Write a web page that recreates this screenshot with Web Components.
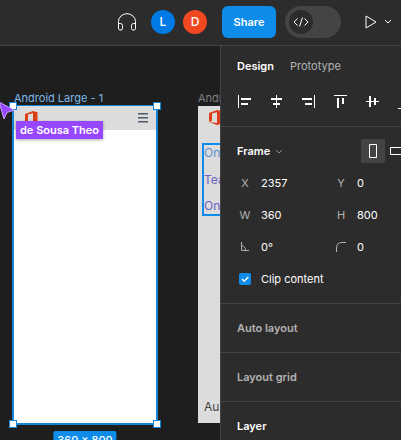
<!DOCTYPE html>
<html lang="en">
<head>
<meta charset="utf-8">
<title>Design editor</title>
<style>
html, body { height: 100%; }
body { margin: 0; overflow: hidden; background: #1e1e1e; font-family: Inter, "Liberation Sans", sans-serif; font-size: 11px; line-height: 16px; color: #fff; }
</style>
</head>
<body>
<editor-app></editor-app>
<script>
const reset = `
  *, *::before, *::after { box-sizing: border-box; }
  button, input { font: inherit; color: inherit; background: none; border: 0; padding: 0; margin: 0; }
  svg { display: block; }
  h2 { margin: 0; font-size: 11px; line-height: 16px; font-weight: 600; }
`;
function define(name, css, html) {
  customElements.define(name, class extends HTMLElement {
    constructor() {
      super();
      const markup = typeof html === 'function' ? html(this) : html;
      this.attachShadow({ mode: 'open' }).innerHTML = `<style>${reset}${css}</style>${markup}`;
    }
  });
}

define('user-avatar', `
  :host { display: grid; place-items: center; width: 24px; height: 24px; border-radius: 50%; background: var(--tone); font-size: 12px; font-weight: 500; }
`, `<slot></slot>`);

define('dev-switch', `
  :host { display: block; }
  label { display: flex; align-items: center; width: 56px; height: 32px; padding: 4px; border-radius: 16px; background: #444; }
  input { appearance: none; position: absolute; }
  span { display: grid; place-items: center; width: 24px; height: 24px; border-radius: 50%; background: #2c2c2c; }
`, `<label><input type="checkbox" role="switch" aria-label="Dev mode"><span>
  <svg width="16" height="10" viewBox="0 0 16 10" fill="none" stroke="#fff"><path d="M4.500 1.500 1 5l3.500 3.500M11.500 1.500 15 5l-3.500 3.500M9.500 .5l-3 9"/></svg></span></label>`);

define('top-bar', `
  :host { display: flex; justify-content: flex-end; align-items: center; height: 46px; padding: 0 9px 2px 0; background: #2c2c2c; border-bottom: 1px solid #444; }
  .people { display: flex; gap: 8px; margin: 0 15px 0 14px; }
  .share { width: 54px; height: 32px; margin-right: 9px; border-radius: 6px; background: #0d8ce9; font-weight: 600; }
  .play { margin: 0 7px 0 24px; }
`, `
  <button aria-label="Audio"><svg width="20" height="18" viewBox="0 0 20 18" fill="none" stroke="#fff"><path d="M1.500 15V8.500a8.500 7.800 0 0 1 17 0V15M1.500 10.500h2q2 0 2 2v3q0 1.500-1.500 1.500h-1q-1.500 0-1.500-1.500zM18.500 10.500h-2q-2 0-2 2v3q0 1.500 1.500 1.500h1q1.500 0 1.500-1.500z"/></svg></button>
  <div class="people"><user-avatar style="--tone:#007be5">L</user-avatar><user-avatar style="--tone:#f24822">D</user-avatar></div>
  <button class="share">Share</button>
  <dev-switch></dev-switch>
  <button class="play" aria-label="Present"><svg width="12" height="14" viewBox="0 0 12 14" fill="none" stroke="#fff"><path d="M1 1v12l10-6z"/></svg></button>
  <button aria-label="Present options"><svg width="8" height="5" viewBox="0 0 8 5" fill="none" stroke="#fff"><path d="m1 1 3 3 3-3"/></svg></button>`);

define('office-logo', `:host { display: block; }`,
  `<svg width="13" height="15" viewBox="0 0 13 15"><path fill="#dc3e15" d="M0 3 8 0l4.500 1.300v12.400L8 15l-8-3 8 1V2.300L3 3.500v7.200L0 12z"/></svg>`);

define('remote-cursor', `
  :host { position: absolute; left: 0; top: 101px; }
  svg { position: absolute; left: 0; top: 0; }
  span { position: absolute; left: 16px; top: 20px; padding: 1px 4px; background: #9747ff; font-weight: 600; white-space: nowrap; box-shadow: 0 1px 3px #0005; }
`, `<svg width="15" height="19" viewBox="0 0 15 19"><path d="M-1 1 14 9 7 11.500 4 18z" fill="#9747ff" stroke="#c9a0ff"/></svg><span><slot></slot></span>`);

define('phone-frame', `
  :host { position: absolute; left: 14px; top: 106px; width: 142px; height: 317px; background: #fff; box-shadow: 0 0 0 1px #1684d5, 1px 1px 0 1px #1684d5, -1px 1px 0 1px #1684d5; }
  .title { position: absolute; left: 0; top: -16px; color: #7bb8e4; white-space: nowrap; }
  header { display: flex; justify-content: space-between; align-items: center; height: 24px; padding: 0 8px 0 11px; background: #dcdcdc; }
  i { position: absolute; width: 8px; height: 8px; background: #fff; border: 1px solid #1684d5; }
  .nw, .sw { left: -5px; } .ne, .se { right: -5px; }
  .nw, .ne { top: -4px; } .sw, .se { bottom: -5px; }
  .size { position: absolute; left: 50%; top: 325px; translate: -50% 0; padding: 1px 4px; border-radius: 2px; background: #0d8ce9; font-weight: 500; white-space: nowrap; }
`, `<div class="title">Android Large - 1</div>
  <header><office-logo></office-logo><svg width="10" height="10" viewBox="0 0 10 10" fill="#4d5967"><path d="M0 0h10v1.500H0zM0 4h10v1.500H0zM0 8h10v1.500H0z"/></svg></header>
  <i class="nw"></i><i class="ne"></i><i class="sw"></i><i class="se"></i><div class="size">360 x 800</div>`);

define('menu-frame', `
  :host { position: absolute; left: 198px; top: 106px; width: 143px; height: 317px; background: #dcdcdc; font-size: 12px; }
  .title { position: absolute; left: 0; top: -16px; font-size: 11px; color: #808080; }
  office-logo { position: absolute; left: 11px; top: 4px; }
  .list { position: absolute; left: 4px; top: 37px; width: 135px; height: 73px; border: 2px solid #0d8ce9; display: flex; flex-direction: column; justify-content: space-between; color: #6a62c4; }
  .list :first-child { color: #5c8fd0; }
  .foot { position: absolute; left: 6px; bottom: 8px; font-size: 12px; color: #444; }
`, `<div class="title">Andr</div><office-logo></office-logo>
  <div class="list"><span>On</span><span>Tea</span><span>On</span></div><div class="foot">Au</div>`);

define('design-canvas', `:host { display: block; position: relative; flex: 1; min-width: 0; overflow: hidden; background: #1e1e1e; }`,
  `<phone-frame></phone-frame><menu-frame></menu-frame><remote-cursor>de Sousa Theo</remote-cursor>`);

define('number-field', `
  :host { display: block; flex: 0 0 96px; }
  label { display: grid; grid-template-columns: 24px 1fr; align-items: center; height: 32px; }
  span { display: grid; place-items: center; width: 16px; color: #b3b3b3; }
  input { width: 100%; min-width: 0; height: 24px; }
`, el => {
  const icons = {
    Rotation: '<svg width="10" height="10" viewBox="0 0 10 10" fill="none" stroke="#b3b3b3"><path d="M1.500 0v8.500H9M1.500 3.500a5 5 0 0 1 4 5"/></svg>',
    Radius: '<svg width="10" height="10" viewBox="0 0 10 10" fill="none" stroke="#b3b3b3"><path d="M.5 10V6q0-5.500 5.500-5.500h4"/></svg>'
  };
  const name = el.getAttribute('name');
  return `<label><span>${icons[name] || name}</span><input type="text" aria-label="${name}" value="${el.getAttribute('value')}"></label>`;
});

define('check-option', `
  :host { display: block; }
  label { display: flex; align-items: center; gap: 10px; height: 32px; padding-left: 2px; }
  .box { display: grid; }
  .box > * { grid-area: 1 / 1; }
  input { appearance: none; width: 12px; height: 12px; border-radius: 2px; background: #0d8ce9; }
  svg { pointer-events: none; }
  input:not(:checked) + svg { visibility: hidden; }
`, `<label><span class="box"><input type="checkbox" checked><svg width="12" height="12" viewBox="0 0 12 12" fill="none" stroke="#fff" stroke-width="1.500"><path d="m3 6 2.200 2.200L9.300 4"/></svg></span><slot></slot></label>`);

define('align-bar', `
  :host { display: flex; height: 41px; padding: 0 8px; border-bottom: 1px solid #444; overflow: hidden; }
  button { flex: 0 0 32px; height: 32px; display: grid; place-items: center; }
`, [
  ['left', 'M1 1h1v13H1zM4 4h10v2H4zM4 9h7v2H4z'],
  ['horizontal center', 'M7 1h1v13H7zM2 4h11v2H2zM4 9h7v2H4z'],
  ['right', 'M13 1h1v13h-1zM1 4h10v2H1zM4 9h7v2H4z'],
  ['top', 'M1 1h13v1H1zM4 4h2v10H4zM9 4h2v6H9z'],
  ['vertical center', 'M1 7h13v1H1zM4 2h2v11H4zM9 4h2v7H9z'],
  ['bottom', 'M1 14h13v1H1zM4 2h2v10H4zM9 6h2v6H9z']
].map(([n, d]) => `<button aria-label="Align ${n}"><svg width="16" height="16" viewBox="0 0 16 16" fill="#fff"><path d="${d}"/></svg></button>`).join(''));

define('frame-section', `
  :host { display: block; padding: 8px 0 8px 16px; border-bottom: 1px solid #444; overflow: hidden; }
  .head, .row { display: flex; align-items: center; height: 32px; }
  .kind { display: flex; align-items: center; gap: 5px; font-weight: 600; }
  .orient { display: grid; place-items: center; flex: 0 0 24px; height: 24px; border-radius: 2px; }
  .on { background: #444; margin-left: auto; }
  .landscape { flex-basis: 16px; justify-items: start; padding-left: 5px; overflow: hidden; }
`, `
  <div class="head"><button class="kind">Frame<svg width="8" height="5" viewBox="0 0 8 5" fill="none" stroke="#8c8c8c"><path d="m1 1 3 3 3-3"/></svg></button>
    <button class="orient on" aria-label="Portrait"><svg width="8" height="14" viewBox="0 0 8 14" fill="none" stroke="#fff"><path d="M.5.5h7v13h-7z"/></svg></button>
    <button class="orient landscape" aria-label="Landscape"><svg width="14" height="8" viewBox="0 0 14 8" fill="none" stroke="#fff"><path d="M.5.5h13v7H.5z"/></svg></button></div>
  <div class="row"><number-field name="X" value="2357"></number-field><number-field name="Y" value="0"></number-field></div>
  <div class="row"><number-field name="W" value="360"></number-field><number-field name="H" value="800"></number-field></div>
  <div class="row"><number-field name="Rotation" value="0°"></number-field><number-field name="Radius" value="0"></number-field></div>
  <check-option>Clip content</check-option>`);

define('panel-section', `
  :host { display: flex; align-items: center; height: 49px; padding: 0 16px; border-bottom: 1px solid #444; color: #b3b3b3; }
  :host([active]) { color: #fff; }
`, `<h2><slot></slot></h2>`);

define('inspector-panel', `
  :host { display: block; flex: 0 0 181px; min-width: 0; overflow: hidden; background: #2c2c2c; border-left: 1px solid #444; }
  nav { display: flex; align-items: center; gap: 16px; height: 40px; padding: 0 16px; color: #b3b3b3; }
  .current { color: #fff; font-weight: 600; }
`, `
  <nav><button class="current">Design</button><button>Prototype</button></nav>
  <align-bar></align-bar>
  <frame-section></frame-section>
  <panel-section>Auto layout</panel-section>
  <panel-section>Layout grid</panel-section>
  <panel-section active>Layer</panel-section>`);

define('editor-app', `
  :host { display: flex; flex-direction: column; height: 100%; }
  main { display: flex; flex: 1; min-height: 0; }
  design-canvas { margin-top: -46px; }
  top-bar { position: relative; z-index: 1; flex: none; }
`, `<top-bar></top-bar><main><design-canvas></design-canvas><inspector-panel></inspector-panel></main>`);
</script>
</body>
</html>
